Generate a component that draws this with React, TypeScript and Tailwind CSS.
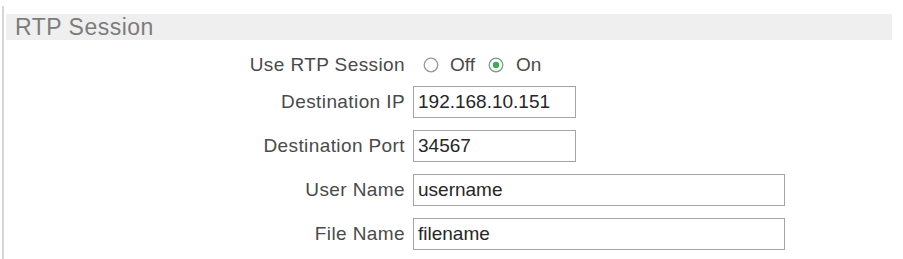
import React from 'react';

const Radio: React.FC<{ checked?: boolean }> = ({ checked }) => (
  <svg width="16" height="16" viewBox="0 0 16 16" className="shrink-0">
    <circle cx="8" cy="8" r="6.8" fill="#fff" stroke={checked ? '#74a283' : '#8f9ba3'} strokeWidth="1.3" />
    {checked && <circle cx="8" cy="8" r="3.2" fill="#3faa5c" />}
  </svg>
);

const Field: React.FC<{ label: string; value: string; wide?: boolean }> = ({ label, value, wide }) => (
  <div className="flex items-center h-[32px]">
    <div className="w-[407px] shrink-0 text-right pr-[8px] tracking-[0.4px] text-[#4a4a4a]">{label}</div>
    <div
      className={`${wide ? 'w-[372px]' : 'w-[163px]'} h-[32px] border border-[#a4a4a4] bg-white px-[4px] flex items-center text-[#262626]`}
    >
      {value}
    </div>
  </div>
);

export default function App() {
  return (
    <div className="w-[903px] h-[259px] bg-white overflow-hidden font-['Liberation_Sans',Arial,sans-serif] text-[19px]">
      <div className="ml-[2px] mt-[6px] h-[253px] border-l-2 border-[#d6d6d6] pl-[2px] pt-[8px]">
        <div className="w-[886px] h-[26px] bg-[#efefef] flex items-center pl-[9px] text-[23px] tracking-[0.5px] text-[#7c7c7c]">
          RTP Session
        </div>
        <div className="flex items-center h-[34px] mt-[8px]">
          <div className="w-[407px] shrink-0 text-right pr-[8px] tracking-[0.4px] text-[#4a4a4a]">Use RTP Session</div>
          <div className="flex items-center text-[#4a4a4a] ml-[10px]">
            <Radio />
            <span className="ml-[11px]">Off</span>
            <span className="ml-[13px] flex">
              <Radio checked />
            </span>
            <span className="ml-[12px]">On</span>
          </div>
        </div>
        <div className="mt-[4px] flex flex-col gap-[12px]">
          <Field label="Destination IP" value="192.168.10.151" />
          <Field label="Destination Port" value="34567" />
          <Field label="User Name" value="username" wide />
          <Field label="File Name" value="filename" wide />
        </div>
      </div>
    </div>
  );
}
